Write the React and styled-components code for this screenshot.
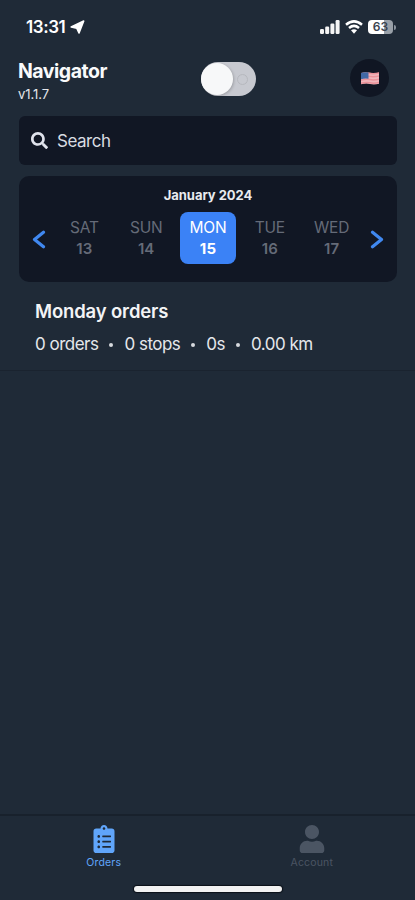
import React from "react";
import styled, { createGlobalStyle } from "styled-components";
import { FaClipboardList, FaSearch, FaUser } from "react-icons/fa";

const GlobalStyle = createGlobalStyle`
  * { box-sizing: border-box; }
  body { margin: 0; background: #1f2937; }
`;

const Screen = styled.div`
  width: 415px;
  height: 900px;
  display: flex;
  flex-direction: column;
  overflow: hidden;
  background: #1f2a37;
  color: #f3f4f6;
  font-family: Inter, "Liberation Sans", sans-serif;
  white-space: nowrap;
`;

const StatusBar = styled.div`
  height: 54px;
  padding: 0 19px 0 26px;
  display: flex;
  align-items: center;
  justify-content: space-between;
`;

const Clock = styled.div`
  display: flex;
  align-items: center;
  gap: 5px;
  font-size: 17px;
  font-weight: 600;
  letter-spacing: -0.42px;
  color: #fff;
`;

const Indicators = styled.div`
  display: flex;
  align-items: center;
  gap: 5px;
`;

const Battery = styled.div`
  display: flex;
  align-items: center;
  gap: 1px;
`;

const BatteryBody = styled.div`
  width: 25px;
  height: 14px;
  border-radius: 4px;
  background: linear-gradient(90deg, #fff 64%, #99a0a8 64%);
  color: #3a434f;
  font-size: 12px;
  font-weight: 600;
  line-height: 14px;
  text-align: center;
`;

const BatteryTip = styled.div`
  width: 2px;
  height: 5px;
  border-radius: 0 2px 2px 0;
  background: #8b939d;
`;

const Header = styled.header`
  height: 62px;
  padding: 0 26px 0 18px;
  display: grid;
  grid-template-columns: 183px 1fr 39px;
  align-items: start;
`;

const Title = styled.h1`
  margin: 5px 0 0;
  font-size: 19.5px;
  line-height: 24px;
  font-weight: 700;
  letter-spacing: -0.5px;
  color: #f9fafb;
`;

const Version = styled.div`
  margin-top: 3px;
  font-size: 13px;
  line-height: 16px;
  letter-spacing: -0.05px;
  color: #e5e7eb;
`;

const Toggle = styled.div`
  width: 55px;
  height: 34px;
  margin-top: 8px;
  padding: 1px 8px 1px 0;
  display: flex;
  align-items: center;
  justify-content: space-between;
  border-radius: 17px;
  background: #c7c9d0;
`;

const Knob = styled.div`
  width: 32px;
  height: 32px;
  border-radius: 50%;
  background: #f7f8f9;
  box-shadow: 1px 1px 3px #0003;
`;

const OffMark = styled.div`
  width: 11px;
  height: 11px;
  border: 1px solid #b6b8be;
  border-radius: 50%;
`;

const LanguageButton = styled.div`
  width: 39px;
  height: 38px;
  margin-top: 5px;
  display: grid;
  place-items: center;
  border-radius: 50%;
  background: #101623;
`;

const SearchBox = styled.div`
  height: 49px;
  margin: 0 18px 11px 19px;
  padding: 0 12px;
  display: flex;
  align-items: center;
  gap: 9px;
  border-radius: 6px;
  background: #111724;
  color: #d9dce2;
  font-size: 17px;
  letter-spacing: -0.48px;
  svg { width: 17px; height: 17px; color: #e0e3ec; }
`;

const Calendar = styled.section`
  height: 106px;
  margin: 0 18px 0 19px;
  padding-top: 10px;
  border-radius: 10px;
  background: #111724;
`;

const Month = styled.div`
  height: 26px;
  padding-top: 1px;
  text-align: center;
  font-size: 13px;
  line-height: 16px;
  font-weight: 700;
  letter-spacing: -0.05px;
  color: #e9ebef;
`;

const Week = styled.div`
  display: grid;
  grid-template-columns: 34.5px repeat(5, 61.8px) 34.5px;
  align-items: center;
`;

const Chevron = styled.svg`
  width: 14px;
  height: 19px;
  margin-top: 3px;
  justify-self: start;
  margin-left: ${({ $end }) => ($end ? "8px" : "12.5px")};
`;

const Day = styled.div`
  width: 56px;
  height: 52px;
  padding-top: 6px;
  justify-self: center;
  text-align: center;
  border-radius: 8px;
  font-size: 15.5px;
  line-height: 20px;
  letter-spacing: -0.25px;
  color: ${({ $active }) => ($active ? "#fff" : "#656b78")};
  background: ${({ $active }) => ($active ? "#3b82f6" : "transparent")};
`;

const DateNumber = styled.div`
  margin-top: 1px;
  font-size: 15px;
  font-weight: ${({ $active }) => ($active ? 700 : 600)};
  letter-spacing: 0.1px;
`;

const Summary = styled.section`
  height: 89px;
  padding: 17px 35px 0;
  border-bottom: 1px solid #1a232f;
`;

const SummaryTitle = styled.h2`
  margin: 0;
  font-size: 18.5px;
  line-height: 25px;
  font-weight: 600;
  letter-spacing: -0.15px;
  color: #f3f4f6;
`;

const Stats = styled.div`
  margin-top: 8px;
  display: flex;
  align-items: center;
  font-size: 17px;
  line-height: 24px;
  letter-spacing: -0.51px;
  color: #e5e7eb;
`;

const Dot = styled.i`
  width: 4px;
  height: 4px;
  margin: 1px 11px 0;
  border-radius: 50%;
  background: #d7dade;
`;

const TabBar = styled.nav`
  height: 86px;
  margin-top: auto;
  display: flex;
  flex-direction: column;
  border-top: 2px solid #18212c;
`;

const Tabs = styled.div`
  height: 70px;
  display: grid;
  grid-template-columns: 1fr 1fr;
`;

const Tab = styled.div`
  padding-top: 9px;
  padding-left: ${({ $active }) => ($active ? "0" : "1px")};
  display: flex;
  flex-direction: column;
  align-items: center;
  gap: 3px;
  font-size: 10.5px;
  line-height: 13px;
  letter-spacing: 0.15px;
  color: ${({ $active }) => ($active ? "#60a5fa" : "#4b5563")};
  svg { width: 28px; height: 28px; }
`;

const HomeIndicator = styled.div`
  width: 148px;
  height: 6px;
  margin: 0 auto;
  border-radius: 3px;
  background: #f2f2f2;
  box-shadow: 0 0 1px 1px #0b1018;
`;

const days = [["SAT", 13], ["SUN", 14], ["MON", 15], ["TUE", 16], ["WED", 17]];

function LocationArrow() {
  return (
    <svg width="15" height="14" viewBox="0 0 15 14" fill="#fff" stroke="#fff" strokeWidth="1.6" strokeLinejoin="round">
      <path d="M13.7 1 9 13 6.8 8.2 1.2 7Z" />
    </svg>
  );
}

function Signal() {
  return (
    <svg width="20" height="14" viewBox="0 0 20 14" fill="#f5f5f5">
      <rect x="0" y="9" width="4" height="5" rx="1.2" />
      <rect x="5.2" y="6.5" width="4" height="7.5" rx="1.2" />
      <rect x="10.4" y="3.5" width="4" height="10.5" rx="1.2" />
      <rect x="15.6" y="0" width="4" height="14" rx="1.2" />
    </svg>
  );
}

function Wifi() {
  return (
    <svg width="18" height="14" viewBox="0 0 18 14" fill="none" stroke="#fff" strokeWidth="2.5">
      <path d="M1 4.8Q9-2 17 4.8M4 8Q9 3.8 14 8" />
      <path d="M6 10.3Q9 8 12 10.3L9 13.7Z" fill="#fff" stroke="none" />
    </svg>
  );
}

function Flag() {
  return (
    <svg width="18" height="13" viewBox="0 0 18 13">
      <path d="M0 1Q4-.5 9 .8T18 .5V11.8Q13 13 9 12T0 12.3Z" fill="#f1b8bd" />
      <path d="M7 1.2Q13 2.2 18 1M7 4.2Q13 5.2 18 4M0 8.2Q5 6.8 9 7.6T18 7.2M0 11.3Q5 9.8 9 10.8T18 10.4" fill="none" stroke="#eb929a" strokeWidth="1.5" />
      <path d="M0 1Q4-.3 7.5.6V6.8Q4 6.2 0 7.2Z" fill="#4269a6" />
    </svg>
  );
}

export default function App() {
  return (
    <>
      <GlobalStyle />
      <Screen>
        <StatusBar>
          <Clock>13:31<LocationArrow /></Clock>
          <Indicators>
            <Signal />
            <Wifi />
            <Battery><BatteryBody>63</BatteryBody><BatteryTip /></Battery>
          </Indicators>
        </StatusBar>
        <Header>
          <div>
            <Title>Navigator</Title>
            <Version>v1.1.7</Version>
          </div>
          <Toggle><Knob /><OffMark /></Toggle>
          <LanguageButton><Flag /></LanguageButton>
        </Header>
        <SearchBox><FaSearch />Search</SearchBox>
        <Calendar>
          <Month>January 2024</Month>
          <Week>
            <Chevron viewBox="0 0 14 19" fill="none" stroke="#4088f0" strokeWidth="3.2" strokeLinecap="round" strokeLinejoin="round">
              <path d="M11.5 2.2 2.5 9.5l9 7.3" />
            </Chevron>
            {days.map(([name, date]) => (
              <Day key={date} $active={date === 15}>
                {name}
                <DateNumber $active={date === 15}>{date}</DateNumber>
              </Day>
            ))}
            <Chevron $end viewBox="0 0 14 19" fill="none" stroke="#4088f0" strokeWidth="3.2" strokeLinecap="round" strokeLinejoin="round">
              <path d="m2.5 2.2 9 7.3-9 7.3" />
            </Chevron>
          </Week>
        </Calendar>
        <Summary>
          <SummaryTitle>Monday orders</SummaryTitle>
          <Stats>
            0 orders<Dot />0 stops<Dot />0s<Dot />0.00 km
          </Stats>
        </Summary>
        <TabBar>
          <Tabs>
            <Tab $active><FaClipboardList />Orders</Tab>
            <Tab><FaUser />Account</Tab>
          </Tabs>
          <HomeIndicator />
        </TabBar>
      </Screen>
    </>
  );
}
